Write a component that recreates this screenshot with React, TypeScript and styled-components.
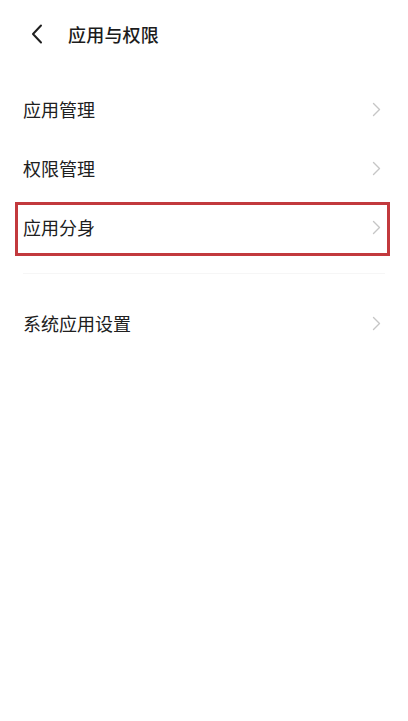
import React from "react";
import styled, { createGlobalStyle } from "styled-components";

const Global = createGlobalStyle`
  html, body { margin: 0; padding: 0; background: #ffffff; }
  body { font-family: "Noto Sans CJK SC", "Noto Sans", sans-serif; }
`;

const Page = styled.div`
  width: 408px;
  min-height: 721px;
  background: #ffffff;
  display: flex;
  flex-direction: column;
`;

const Header = styled.header`
  height: 67px;
  display: flex;
  align-items: center;
  padding-left: 28px;
  gap: 22px;
`;

const BackButton = styled.button`
  border: none;
  background: none;
  padding: 0;
  width: 18px;
  height: 22px;
  display: flex;
  align-items: center;
  justify-content: center;
  color: #1f1f1f;
`;

const Title = styled.h1`
  margin: 0;
  font-size: 18px;
  font-weight: 500;
  color: #1c1c1c;
  letter-spacing: 0.2px;
`;

const Group = styled.section`
  display: flex;
  flex-direction: column;
  margin-top: ${(p: { $top: number }) => p.$top}px;
`;

const Row = styled.div`
  position: relative;
  height: 59px;
  display: flex;
  align-items: center;
  justify-content: space-between;
  padding: 0 27px 0 23px;
`;

const Label = styled.span`
  font-size: 18px;
  color: #202020;
  line-height: 1;
  margin-top: -2px;
`;

const Chevron = styled.svg`
  width: 9px;
  height: 15px;
  color: #c6c6c6;
`;

const Highlight = styled.div`
  position: absolute;
  left: 15px;
  right: 18px;
  top: 4px;
  bottom: 1px;
  border: 3px solid #c2393d;
  pointer-events: none;
`;

const Divider = styled.div`
  height: 1px;
  margin: 16px 23px 0;
  background: #f6f6f6;
`;

const ChevronRight = () => (
  <Chevron viewBox="0 0 9 15" fill="none">
    <path d="M1.5 1.5 L7.5 7.5 L1.5 13.5" stroke="currentColor" strokeWidth="1.4" strokeLinecap="round" strokeLinejoin="round" />
  </Chevron>
);

const Item = ({ label, highlighted }: { label: string; highlighted?: boolean }) => (
  <Row>
    <Label>{label}</Label>
    <ChevronRight />
    {highlighted && <Highlight />}
  </Row>
);

export default function App() {
  return (
    <Page>
      <Global />
      <Header>
        <BackButton aria-label="back">
          <svg width="14" height="20" viewBox="0 0 14 20" fill="none">
            <path d="M11 1.5 L3 10 L11 18.5" stroke="currentColor" strokeWidth="2" strokeLinecap="round" strokeLinejoin="round" />
          </svg>
        </BackButton>
        <Title>应用与权限</Title>
      </Header>
      <Group $top={13}>
        <Item label="应用管理" />
        <Item label="权限管理" />
        <Item label="应用分身" highlighted />
      </Group>
      <Divider />
      <Group $top={20}>
        <Item label="系统应用设置" />
      </Group>
    </Page>
  );
}
